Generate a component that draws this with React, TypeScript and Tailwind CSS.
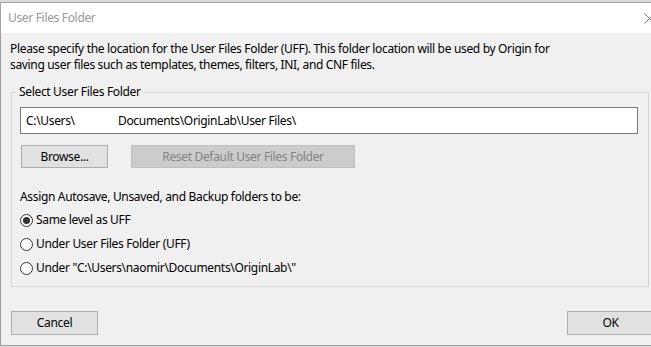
import React from 'react';

const font = { fontFamily: '"Noto Sans", "Liberation Sans", sans-serif' };

function Radio({ checked, label }: { checked?: boolean; label: string }) {
  return (
    <div className="flex items-center h-[24px] gap-[3px]">
      <span className="w-[13px] h-[13px] rounded-full border border-[#333] bg-white flex items-center justify-center">
        {checked && <span className="w-[7px] h-[7px] rounded-full bg-[#333]" />}
      </span>
      <span className="whitespace-nowrap">{label}</span>
    </div>
  );
}

export default function App() {
  return (
    <div
      className="w-[651px] h-[347px] overflow-hidden bg-[#dadada] text-[12px] leading-[16px] tracking-[-0.33px] text-black"
      style={font}
    >
      <div className="w-[672px] h-[344px] mt-[2px] border border-[#a0a0a0] bg-[#f0f0f0] flex flex-col">
        {/* Title bar */}
        <div className="h-[30px] bg-white flex items-center justify-between pl-[7px] pr-[16px] shrink-0">
          <span className="text-[#999]">User Files Folder</span>
          <svg width="11" height="11" viewBox="0 0 11 11" className="text-[#777]">
            <path d="M0.5 0.5 L10.5 10.5 M10.5 0.5 L0.5 10.5" stroke="currentColor" strokeWidth="1" fill="none" />
          </svg>
        </div>

        {/* Body */}
        <div className="flex-1 flex flex-col pl-[9px] pt-[8px]">
          <p className="whitespace-nowrap">
            Please specify the location for the User Files Folder (UFF). This folder location will be used by Origin for
            <br />
            saving user files such as templates, themes, filters, INI, and CNF files.
          </p>

          <fieldset className="mt-[11px] ml-px w-[638px] border border-[#d5d5d5] px-[8px] pb-[6px]">
            <legend className="ml-[-4px] px-[3px]">Select User Files Folder</legend>

            <div className="mt-[7px] w-[618px] h-[27px] border border-[#7a7a7a] bg-white flex items-center pl-[5px] whitespace-nowrap">
              <span className="w-[92px]">C:\Users\</span>
              <span>Documents\OriginLab\User Files\</span>
            </div>

            <div className="mt-[11px] flex gap-[23px] ml-px">
              <button className="w-[87px] h-[23px] border border-[#adadad] bg-[#e1e1e1] text-black">
                Browse...
              </button>
              <button className="w-[224px] h-[23px] border border-[#bfbfbf] bg-[#cccccc] text-[#838383]">
                Reset Default User Files Folder
              </button>
            </div>

            <p className="mt-[21px] whitespace-nowrap">Assign Autosave, Unsaved, and Backup folders to be:</p>
            <div className="mt-[3px] flex flex-col">
              <Radio checked label="Same level as UFF" />
              <Radio label="Under User Files Folder (UFF)" />
              <Radio label={'Under "C:\\Users\\naomir\\Documents\\OriginLab\\"'} />
            </div>
          </fieldset>

          <div className="mt-[24px] flex justify-between pr-[17px]">
            <button className="ml-px w-[87px] h-[24px] border border-[#adadad] bg-[#e1e1e1]">Cancel</button>
            <button className="w-[87px] h-[24px] border border-[#adadad] bg-[#e1e1e1]">OK</button>
          </div>
        </div>
      </div>
    </div>
  );
}
